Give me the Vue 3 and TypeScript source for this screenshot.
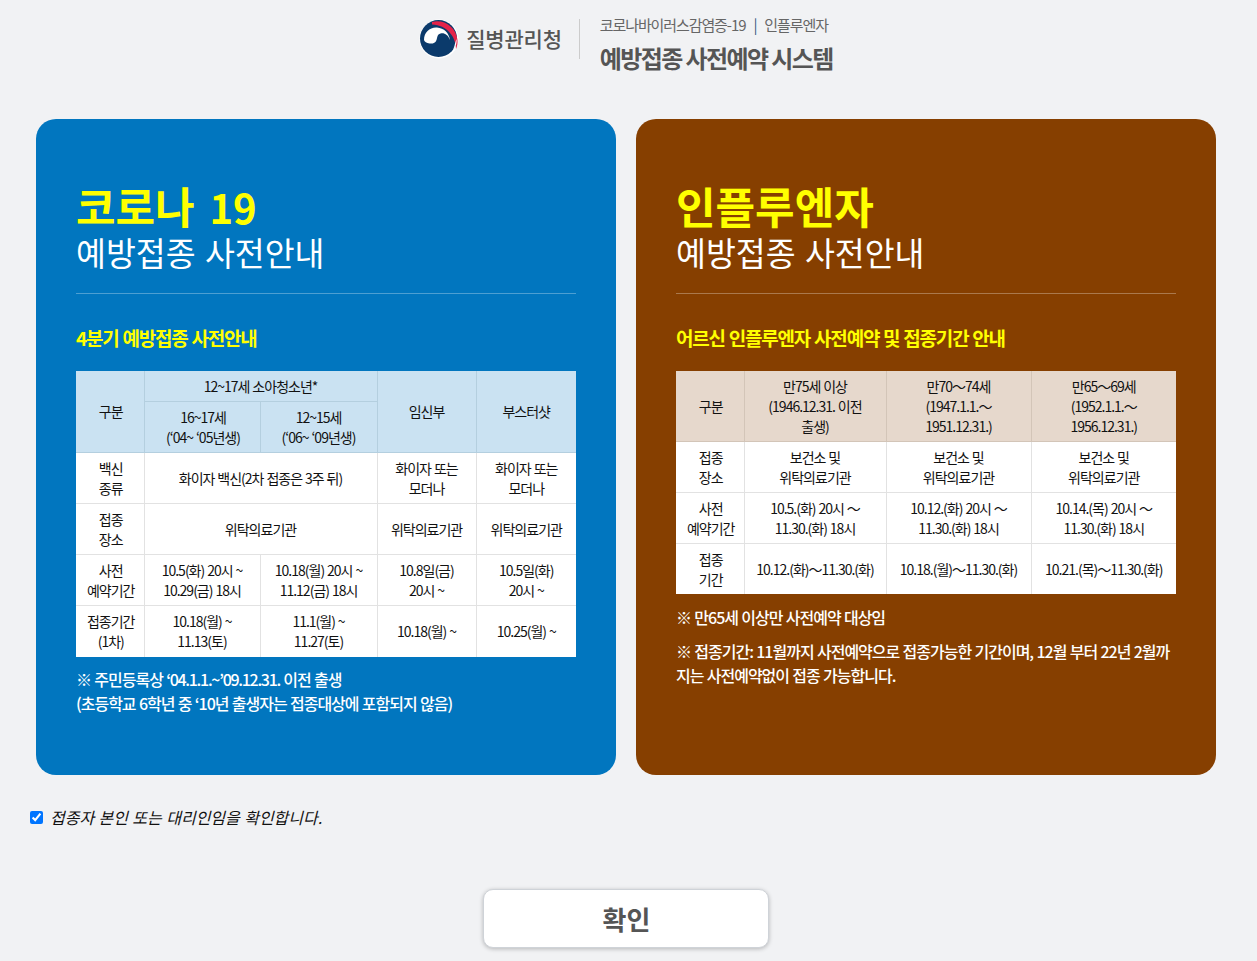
<template>
  <div class="page">
    <header class="top">
      <div class="logo">
        <svg class="mark" width="40" height="40" viewBox="0 0 40 40">
          <circle cx="20" cy="20" r="19.5" fill="#fff" />
          <circle cx="19.5" cy="19.5" r="18.5" fill="#0b3a6b" />
          <path d="M13 3C25 0 37 8 38.5 21C38.8 24 38.3 27 37 30C37 18 28 6 13 5.5Z" fill="#e4234a" />
          <path d="M33 33C37 28 38 24 37.5 20C36 24 35 30 33 33Z" fill="#fff" />
          <path d="M5 21C5 13 11 8 18 8.5C25 9 30 14 31 21C29 15.5 25 13.5 21.5 14.5C18 15.5 18.5 18.5 17.5 21C16.5 24 13.5 25 10.5 24.5C7.5 24 5.5 23 5 21Z" fill="#fff" />
        </svg>
        <span class="agency">질병관리청</span>
      </div>
      <div class="titles">
        <p class="crumb"><span>코로나바이러스감염증-19</span><i>|</i><span>인플루엔자</span></p>
        <h1>예방접종 사전예약 시스템</h1>
      </div>
    </header>

    <main class="cards">
      <section class="card blue">
        <div class="head">
          <h2>코로나 <span class="num">19</span></h2>
          <p>예방접종 사전안내</p>
        </div>
        <h3>4분기 예방접종 사전안내</h3>
        <table class="covid">
          <colgroup>
            <col class="c68" /><col class="c116" /><col class="c117" /><col class="c99" /><col />
          </colgroup>
          <thead>
            <tr>
              <th rowspan="2">구분</th>
              <th colspan="2">12~17세 소아청소년*</th>
              <th rowspan="2">임신부</th>
              <th rowspan="2">부스터샷</th>
            </tr>
            <tr>
              <th>16~17세<br />(‘04~ ‘05년생)</th>
              <th>12~15세<br />(‘06~ ‘09년생)</th>
            </tr>
          </thead>
          <tbody>
            <tr>
              <td>백신<br />종류</td>
              <td colspan="2">화이자 백신(2차 접종은 3주 뒤)</td>
              <td>화이자 또는<br />모더나</td>
              <td>화이자 또는<br />모더나</td>
            </tr>
            <tr>
              <td>접종<br />장소</td>
              <td colspan="2">위탁의료기관</td>
              <td>위탁의료기관</td>
              <td>위탁의료기관</td>
            </tr>
            <tr>
              <td>사전<br />예약기간</td>
              <td>10.5(화) 20시 ~<br />10.29(금) 18시</td>
              <td>10.18(월) 20시 ~<br />11.12(금) 18시</td>
              <td>10.8일(금)<br />20시 ~</td>
              <td>10.5일(화)<br />20시 ~</td>
            </tr>
            <tr>
              <td>접종기간<br />(1차)</td>
              <td>10.18(월) ~<br />11.13(토)</td>
              <td>11.1(월) ~<br />11.27(토)</td>
              <td>10.18(월) ~</td>
              <td>10.25(월) ~</td>
            </tr>
          </tbody>
        </table>
        <div class="notes covid-notes">
          <p>※ 주민등록상 <span class="tight">‘04.1.1.~’09.12.31.</span> 이전 출생<br />(초등학교 6학년 중 ‘10년 출생자는 접종대상에 포함되지 않음)</p>
        </div>
      </section>

      <section class="card brown">
        <div class="head">
          <h2>인플루엔자</h2>
          <p>예방접종 사전안내</p>
        </div>
        <h3>어르신 인플루엔자 사전예약 및 접종기간 안내</h3>
        <table class="flu">
          <colgroup>
            <col class="c68" /><col class="c142" /><col class="c145" /><col />
          </colgroup>
          <thead>
            <tr>
              <th>구분</th>
              <th>만75세 이상<br />(1946.12.31. 이전<br />출생)</th>
              <th>만70～74세<br />(1947.1.1.～<br />1951.12.31.)</th>
              <th>만65～69세<br />(1952.1.1.～<br />1956.12.31.)</th>
            </tr>
          </thead>
          <tbody>
            <tr>
              <td>접종<br />장소</td>
              <td>보건소 및<br />위탁의료기관</td>
              <td>보건소 및<br />위탁의료기관</td>
              <td>보건소 및<br />위탁의료기관</td>
            </tr>
            <tr>
              <td>사전<br />예약기간</td>
              <td>10.5.(화) 20시 ～<br />11.30.(화) 18시</td>
              <td>10.12.(화) 20시 ～<br />11.30.(화) 18시</td>
              <td>10.14.(목) 20시 ～<br />11.30.(화) 18시</td>
            </tr>
            <tr>
              <td>접종<br />기간</td>
              <td>10.12.(화)～11.30.(화)</td>
              <td>10.18.(월)～11.30.(화)</td>
              <td>10.21.(목)～11.30.(화)</td>
            </tr>
          </tbody>
        </table>
        <div class="notes flu-notes">
          <p>※ 만65세 이상만 사전예약 대상임</p>
          <p>※ 접종기간: 11월까지 사전예약으로 접종가능한 기간이며, 12월 부터 22년 2월까지는 사전예약없이 접종 가능합니다.</p>
        </div>
      </section>
    </main>

    <label class="agree">
      <input v-model="agreed" type="checkbox" />
      <span>접종자 본인 또는 대리인임을 확인합니다.</span>
    </label>

    <div class="actions">
      <button type="button">확인</button>
    </div>
  </div>
</template>

<script setup lang="ts">
import { ref } from "vue";

const agreed = ref<boolean>(true);
</script>

<style>
html,
body {
  margin: 0;
  background: #f1f2f4;
}
</style>

<style scoped>
.page {
  height: 961px;
  overflow: hidden;
  background: #f1f2f4;
  font-family: "Noto Sans CJK KR", "Noto Sans", sans-serif;
  color: #111;
}

.top {
  display: flex;
  justify-content: center;
  align-items: center;
  height: 119px;
  padding-bottom: 32px;
  padding-right: 5px;
  box-sizing: border-box;
}

.logo {
  display: flex;
  align-items: center;
  gap: 7px;
  height: 40px;
  padding-right: 20px;
  margin-bottom: 9px;
}

.logo::after {
  content: "";
  width: 1px;
  height: 40px;
  background: #ccc;
  margin-left: 10px;
}

.agency {
  margin-bottom: 3px;
  font-size: 21px;
  font-weight: 500;
  color: #555;
  letter-spacing: -0.2px;
}

.crumb {
  margin: 0 0 6px;
  font-size: 15px;
  line-height: 22px;
  letter-spacing: -1.1px;
  color: #666;
}

.crumb i {
  font-style: normal;
  margin: 0 8px;
  color: #355d84;
}

h1 {
  margin: 0;
  font-size: 24px;
  line-height: 32px;
  font-weight: 700;
  letter-spacing: -1.6px;
  color: #555;
}

.cards {
  display: flex;
  gap: 20px;
  padding-left: 36px;
}

.card {
  width: 580px;
  height: 656px;
  box-sizing: border-box;
  padding: 58px 40px 0;
  border-radius: 20px;
  color: #fff;
}

.blue {
  background: #0176bf;
}

.brown {
  background: #863f00;
}

.head {
  height: 116px;
  border-bottom: 1px solid rgba(255, 255, 255, 0.3);
}

h2 {
  margin: 0;
  font-size: 43px;
  line-height: 56px;
  font-weight: 700;
  word-spacing: 5px;
  color: #ffff00;
}

.num {
  font-size: 40px;
  line-height: 0;
}

.head p {
  margin: 1px 0 0;
  font-size: 32.5px;
  line-height: 36px;
  font-weight: 400;
  word-spacing: 2px;
}

h3 {
  margin: 29px 0 18px;
  font-size: 19px;
  line-height: 30px;
  font-weight: 700;
  letter-spacing: -1.2px;
  word-spacing: 0.8px;
  color: #ffff00;
}

table {
  width: 500px;
  table-layout: fixed;
  border-collapse: collapse;
  background: #fff;
  color: #111;
  font-size: 14px;
  line-height: 20px;
  letter-spacing: -1px;
  word-spacing: 0.8px;
  text-align: center;
}

.c68 {
  width: 68px;
}

.c99 {
  width: 99px;
}

.c116 {
  width: 116px;
}

.c117 {
  width: 117px;
}

.c142 {
  width: 142px;
}

.c145 {
  width: 145px;
}

th,
td {
  padding: 5px 0;
  border: 1px solid #e2e2e2;
  font-weight: 400;
  box-sizing: border-box;
}

tr > :first-child {
  border-left: 0;
  padding-left: 2px;
}

tr > :last-child {
  border-right: 0;
}

thead tr:first-child > * {
  border-top: 0;
}

tbody tr:last-child > * {
  border-bottom: 0;
}

.covid th {
  background: #cae2f2;
  border-color: #b4cfdf;
}

.covid th[rowspan] {
  padding-bottom: 7px;
}

.covid tbody tr:last-child > * {
  padding-bottom: 6px;
}

.flu th {
  background: #e6d8cc;
  border-color: #d3c5b8;
}

.notes {
  font-size: 16px;
  line-height: 24px;
  font-weight: 500;
  letter-spacing: -1px;
  word-spacing: 0.7px;
}

.notes p {
  margin: 0;
}

.tight {
  letter-spacing: -1.3px;
}

.covid-notes {
  margin-top: 10px;
}

.flu-notes {
  margin-top: 11px;
}

.flu-notes p + p {
  margin-top: 10px;
}

.agree {
  display: flex;
  align-items: center;
  gap: 7px;
  margin: 31px 0 0 30px;
  height: 22px;
  font-size: 16px;
  font-style: italic;
  word-spacing: 0.8px;
}

.agree input {
  width: 13px;
  height: 13px;
  margin: 0;
  accent-color: #0075ff;
}

.actions {
  display: flex;
  justify-content: center;
  margin-top: 61px;
  padding-right: 6px;
}

button {
  width: 286px;
  height: 59px;
  padding-left: 8px;
  border: 1px solid #cfd3d8;
  border-radius: 10px;
  background: #fff;
  box-shadow: 0 1px 4px rgba(0, 0, 0, 0.25);
  font-family: inherit;
  font-size: 26px;
  font-weight: 700;
  color: #555;
}
</style>
